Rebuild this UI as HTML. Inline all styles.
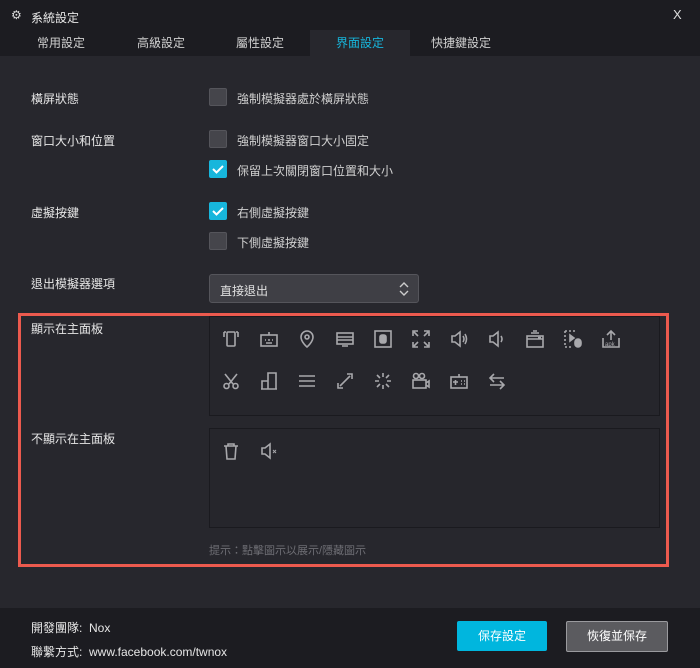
<!DOCTYPE html>
<html><head><meta charset="utf-8"><style>
*{margin:0;padding:0;box-sizing:border-box}
body{width:700px;height:668px;background:#1c1c21;font-family:"Liberation Sans","Noto Sans CJK TC",sans-serif;font-size:12px;color:#e0e0e0;position:relative;overflow:hidden}
.a{position:absolute}
.panel{left:0;top:56px;width:700px;height:552px;background:#27272d}
.tab{top:30px;height:26px;line-height:26px;font-size:12px;color:#cfcfcf}
.lbl{font-size:12px;color:#e6e6e6}
.cb{width:18px;height:18px;border-radius:2px;background:#45454b;border:1px solid #55555b}
.cb.on{background:#17b6dc;border-color:#17b6dc}
.cbt{font-size:12px;color:#d0d0d0}
.box{border:1px solid #1a1a1f;background:#26262c}
svg.i{position:absolute;width:20px;height:20px;fill:none;stroke:#a8a8ac;stroke-width:1.6}
</style></head><body>
<div class="a" style="left:11px;top:8px;font-size:12px;color:#ddd">⚙</div>
<div class="a" style="left:31px;top:9px;font-size:12px;color:#e6e6e6">系統設定</div>
<div class="a" style="left:673px;top:7px;font-size:13px;color:#ddd">X</div>
<div class="a" style="left:310px;top:30px;width:100px;height:26px;background:#27272d"></div>
<div class="a tab" style="left:37px">常用設定</div>
<div class="a tab" style="left:137px">高級設定</div>
<div class="a tab" style="left:236px">屬性設定</div>
<div class="a tab" style="left:336px;color:#17b6dc">界面設定</div>
<div class="a tab" style="left:431px">快捷鍵設定</div>
<div class="a panel"></div>

<div class="a lbl" style="left:31px;top:90px">橫屏狀態</div>
<div class="a cb" style="left:209px;top:88px"></div>
<div class="a cbt" style="left:237px;top:90px">強制模擬器處於橫屏狀態</div>

<div class="a lbl" style="left:31px;top:132px">窗口大小和位置</div>
<div class="a cb" style="left:209px;top:130px"></div>
<div class="a cbt" style="left:237px;top:132px">強制模擬器窗口大小固定</div>
<div class="a cb on" style="left:209px;top:160px"></div>
<svg class="a" style="left:209px;top:160px" width="18" height="18"><path d="M4 9l3.5 3.5L14 6" stroke="#fff" stroke-width="2" fill="none"/></svg>
<div class="a cbt" style="left:237px;top:162px">保留上次關閉窗口位置和大小</div>

<div class="a lbl" style="left:31px;top:204px">虛擬按鍵</div>
<div class="a cb on" style="left:209px;top:202px"></div>
<svg class="a" style="left:209px;top:202px" width="18" height="18"><path d="M4 9l3.5 3.5L14 6" stroke="#fff" stroke-width="2" fill="none"/></svg>
<div class="a cbt" style="left:237px;top:204px">右側虛擬按鍵</div>
<div class="a cb" style="left:209px;top:232px"></div>
<div class="a cbt" style="left:237px;top:234px">下側虛擬按鍵</div>

<div class="a lbl" style="left:31px;top:275px">退出模擬器選項</div>
<div class="a" style="left:209px;top:274px;width:210px;height:29px;background:#3f3f45;border:1px solid #55555b;border-radius:3px"></div>
<div class="a" style="left:220px;top:282px;font-size:12px;color:#e0e0e0">直接退出</div>
<svg class="a" style="left:398px;top:281px" width="12" height="16"><path d="M2 6l4-4 4 4M2 10l4 4 4-4" stroke="#ccc" stroke-width="1.4" fill="none"/></svg>

<div class="a" style="left:18px;top:313px;width:651px;height:254px;border:3px solid #ec5a4e"></div>
<div class="a lbl" style="left:31px;top:320px">顯示在主面板</div>
<div class="a box" style="left:209px;top:316px;width:451px;height:100px"></div>
<div class="a lbl" style="left:31px;top:430px">不顯示在主面板</div>
<div class="a box" style="left:209px;top:428px;width:451px;height:100px"></div>
<div class="a" style="left:209px;top:542px;font-size:11px;color:#6e6e74">提示：點擊圖示以展示/隱藏圖示</div>

<!-- row 1 -->
<svg class="i" style="left:221px;top:329px" viewBox="0 0 20 20"><rect x="6" y="3" width="8" height="14" rx="1"/><path d="M3 3v5M17 3v5M3 3h2M15 3h2"/></svg>
<svg class="i" style="left:259px;top:329px" viewBox="0 0 20 20"><rect x="2" y="6" width="16" height="11"/><path d="M6 11h1M9 11h2M13 11h1M7 14h6M10 3v3"/></svg>
<svg class="i" style="left:297px;top:329px" viewBox="0 0 20 20"><path d="M10 18s-6-5-6-10a6 6 0 0112 0c0 5-6 10-6 10z"/><circle cx="10" cy="8" r="2"/></svg>
<svg class="i" style="left:335px;top:329px" viewBox="0 0 20 20"><rect x="2" y="4" width="16" height="11"/><path d="M2 8h16M2 11h16M7 17h6"/></svg>
<svg class="i" style="left:373px;top:329px" viewBox="0 0 20 20"><rect x="2" y="2" width="16" height="16"/><rect x="7" y="6" width="6" height="8" rx="2" fill="#a8a8ac"/></svg>
<svg class="i" style="left:411px;top:329px" viewBox="0 0 20 20"><path d="M2 7V2h5M13 2h5v5M18 13v5h-5M7 18H2v-5M3 3l4 4M17 3l-4 4M3 17l4-4M17 17l-4-4"/></svg>
<svg class="i" style="left:449px;top:329px" viewBox="0 0 20 20"><path d="M3 7h3l5-4v14l-5-4H3z"/><path d="M14 7q2 3 0 6M16 5q3 5 0 10"/></svg>
<svg class="i" style="left:487px;top:329px" viewBox="0 0 20 20"><path d="M3 7h3l5-4v14l-5-4H3z"/><path d="M14 7q2 3 0 6"/></svg>
<svg class="i" style="left:525px;top:329px" viewBox="0 0 20 20"><rect x="2" y="7" width="16" height="11"/><path d="M2 10h16M6 4h8M8 2h4M13 8.5h3"/></svg>
<svg class="i" style="left:563px;top:329px" viewBox="0 0 20 20"><path d="M2 2h10M2 2v16M2 18h8" stroke-dasharray="2 2"/><path d="M7 6l4 3-4 3z" fill="#a8a8ac"/><rect x="12" y="10" width="6" height="8" rx="3" fill="#a8a8ac"/></svg>
<svg class="i" style="left:601px;top:329px" viewBox="0 0 20 20"><path d="M2 9v9h16V9M10 2v9M6 6l4-4 4 4"/><text x="4" y="17" font-size="6" fill="#a8a8ac" stroke="none" font-family="Liberation Sans">apk</text></svg>
<!-- row 2 -->
<svg class="i" style="left:221px;top:371px" viewBox="0 0 20 20"><circle cx="5.5" cy="15" r="2.5"/><circle cx="14.5" cy="15" r="2.5"/><path d="M4 3l8 10M16 3l-8 10"/></svg>
<svg class="i" style="left:259px;top:371px" viewBox="0 0 20 20"><path d="M2 18h16M3 18V10h6v8M9 18V2h8v16"/></svg>
<svg class="i" style="left:297px;top:371px" viewBox="0 0 20 20"><path d="M2 5h16M2 10h16M2 15h16"/></svg>
<svg class="i" style="left:335px;top:371px" viewBox="0 0 20 20"><path d="M5 15l10-10M12 3h5v5M3 12v5h5"/></svg>
<svg class="i" style="left:373px;top:371px" viewBox="0 0 20 20"><path d="M10 2v4M10 14v4M2 10h4M14 10h4M4 4l3 3M16 4l-3 3M4 16l3-3M16 16l-3-3"/></svg>
<svg class="i" style="left:411px;top:371px" viewBox="0 0 20 20"><rect x="2" y="9" width="13" height="8"/><circle cx="5" cy="5" r="2.5"/><circle cx="11" cy="5" r="2.5"/><path d="M15 12l3-2v6l-3-2"/></svg>
<svg class="i" style="left:449px;top:371px" viewBox="0 0 20 20"><rect x="2" y="6" width="16" height="11"/><path d="M4 11h5M6.5 9v5M12 10h1M15 10h1M12 13h1M15 13h1M10 3v3"/></svg>
<svg class="i" style="left:487px;top:371px" viewBox="0 0 20 20"><path d="M3 7h14M7 3L3 7l4 4M17 14H3M13 10l4 4-4 4"/></svg>
<!-- hidden row -->
<svg class="i" style="left:221px;top:441px" viewBox="0 0 20 20"><path d="M3 5h14M7 5V3h6v2M5 5l1 13h8l1-13"/></svg>
<svg class="i" style="left:259px;top:441px" viewBox="0 0 20 20"><path d="M3 7h3l5-4v14l-5-4H3z"/><path d="M14 9l3 3M17 9l-3 3" stroke-width="1"/></svg>

<div class="a" style="left:31px;top:619px;font-size:12px;color:#e6e6e6">開發團隊:&nbsp;&nbsp;Nox</div>
<div class="a" style="left:31px;top:643px;font-size:12px;color:#e6e6e6">聯繫方式:&nbsp;&nbsp;www.facebook.com/twnox</div>
<div class="a" style="left:457px;top:621px;width:90px;height:30px;background:#00b6de;border-radius:2px;color:#fff;text-align:center;line-height:30px;font-size:12px">保存設定</div>
<div class="a" style="left:566px;top:621px;width:102px;height:31px;background:#5b5b5f;border:1px solid #9a9a9e;border-radius:2px;color:#fff;text-align:center;line-height:29px;font-size:12px">恢復並保存</div>
</body></html>
